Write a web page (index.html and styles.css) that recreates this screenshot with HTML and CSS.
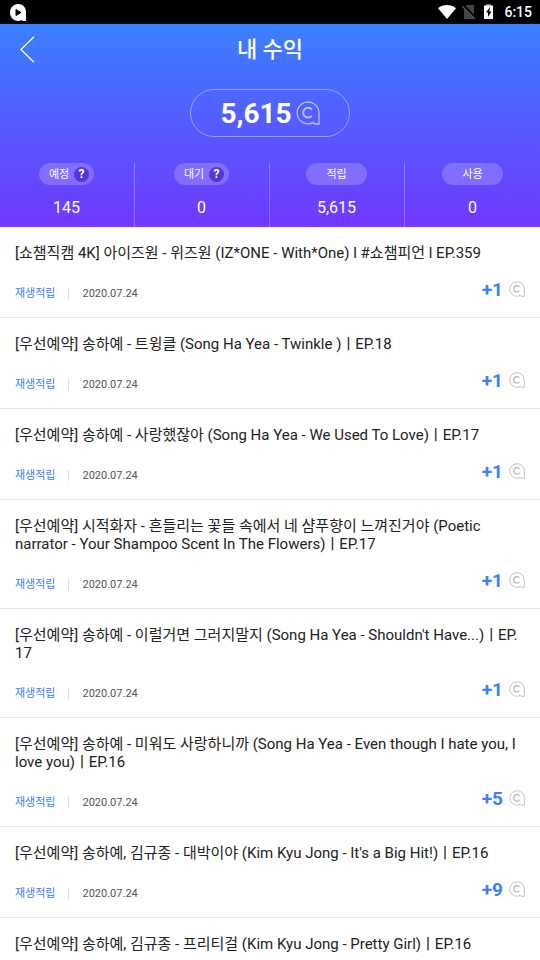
FILE: index.html
```
<!DOCTYPE html>
<html lang="ko">
<head>
<meta charset="utf-8">
<meta name="viewport" content="width=device-width, initial-scale=1">
<title>내 수익</title>
<link rel="stylesheet" href="styles.css">
</head>
<body>
<svg class="defs" aria-hidden="true">
  <symbol id="coin" viewBox="0 0 24 24">
    <path d="M23 12V23H18.500L17.500 21.400A10.900 10.900 0 1 1 23 12Z"/>
    <path stroke-width="2" d="M15.800 8.600A4.900 4.900 0 1 0 15.800 14.800"/>
  </symbol>
</svg>
<div class="statusbar">
  <svg class="app" width="16" height="17" viewBox="0 0 16 17">
    <path fill="#fff" d="M8 0C12.600 0 16 3.500 16 8V17H12.500L11.500 16Q10 17 8 17C3.500 17 0 13 0 8.500S3.500 0 8 0Z"/>
    <path fill="#000" stroke="#000" stroke-linejoin="round" d="M6 5.500L11 8.500L6 11.500Z"/>
  </svg>
  <div class="system">
    <svg width="18" height="14" viewBox="0 0 18 14"><path fill="#fff" d="M0 3.300C5.200-1.100 12.800-1.100 18 3.300L9 14Z"/></svg>
    <svg width="14" height="14" viewBox="0 0 14 14"><path fill="#444" d="M4.500 0H12V14H2V3Z"/><path stroke="#000" stroke-width="2" d="M1 0L14 13"/><path stroke="#555" stroke-width="1.300" d="M0 1L13 14"/></svg>
    <svg class="battery" width="9" height="15" viewBox="0 0 9 15"><path fill="#777" d="M2 0H7V2H2Z"/><path fill="#fff" d="M0 1.500H9V15H0Z"/><path fill="#000" d="M6 3L2 8.500H4V13L7.500 7.500H5.300Z"/></svg>
    <span class="clock">6:15</span>
  </div>
</div>

<header class="header">
  <div class="titlebar">
    <button class="back" type="button" aria-label="뒤로">
      <svg width="15" height="27" viewBox="0 0 15 27"><path fill="none" stroke="#fff" stroke-width="1.300" d="M14 .7L1 13.500L14 26.300"/></svg>
    </button>
    <h1>내 수익</h1>
  </div>
  <div class="total">5,615<svg><use href="#coin"/></svg></div>
  <ul class="summary">
    <li><span class="pill help">예정<button type="button" aria-label="예정 도움말">?</button></span><b>145</b></li>
    <li><span class="pill help">대기<button type="button" aria-label="대기 도움말">?</button></span><b>0</b></li>
    <li><span class="pill">적립</span><b>5,615</b></li>
    <li><span class="pill">사용</span><b>0</b></li>
  </ul>
</header>

<ul class="list">
  <li>
    <p class="name">[쇼챔직캠 4K] 아이즈원 - 위즈원 (IZ*ONE - With*One) l #쇼챔피언 l EP.359</p>
    <div class="meta"><span class="type">재생적립</span><span class="date">2020.07.24</span><span class="point">+1<svg><use href="#coin"/></svg></span></div>
  </li>
  <li>
    <p class="name">[우선예약] 송하예 - 트윙클 (Song Ha Yea - Twinkle )ㅣEP.18</p>
    <div class="meta"><span class="type">재생적립</span><span class="date">2020.07.24</span><span class="point">+1<svg><use href="#coin"/></svg></span></div>
  </li>
  <li>
    <p class="name">[우선예약] 송하예 - 사랑했잖아 (Song Ha Yea - We Used To Love)ㅣEP.17</p>
    <div class="meta"><span class="type">재생적립</span><span class="date">2020.07.24</span><span class="point">+1<svg><use href="#coin"/></svg></span></div>
  </li>
  <li>
    <p class="name">[우선예약] 시적화자 - 흔들리는 꽃들 속에서 네 샴푸향이 느껴진거야 (Poetic narrator - Your Shampoo Scent In The Flowers)ㅣEP.17</p>
    <div class="meta"><span class="type">재생적립</span><span class="date">2020.07.24</span><span class="point">+1<svg><use href="#coin"/></svg></span></div>
  </li>
  <li>
    <p class="name">[우선예약] 송하예 - 이럴거면 그러지말지 (Song Ha Yea - Shouldn't Have...)ㅣEP.<wbr>17</p>
    <div class="meta"><span class="type">재생적립</span><span class="date">2020.07.24</span><span class="point">+1<svg><use href="#coin"/></svg></span></div>
  </li>
  <li>
    <p class="name">[우선예약] 송하예 - 미워도 사랑하니까 (Song Ha Yea - Even though I hate you, I love you)ㅣEP.16</p>
    <div class="meta"><span class="type">재생적립</span><span class="date">2020.07.24</span><span class="point">+5<svg><use href="#coin"/></svg></span></div>
  </li>
  <li>
    <p class="name">[우선예약] 송하예, 김규종 - 대박이야 (Kim Kyu Jong - It's a Big Hit!)ㅣEP.16</p>
    <div class="meta"><span class="type">재생적립</span><span class="date">2020.07.24</span><span class="point">+9<svg><use href="#coin"/></svg></span></div>
  </li>
  <li>
    <p class="name">[우선예약] 송하예, 김규종 - 프리티걸 (Kim Kyu Jong - Pretty Girl)ㅣEP.16</p>
  </li>
</ul>
</body>
</html>
```
FILE: styles.css
```
*{box-sizing:border-box;}
html,body{height:100%;}
body{margin:0;display:flex;flex-direction:column;overflow:hidden;background:#fff;color:#222;font-family:Roboto,"Noto Sans CJK KR",sans-serif;font-size:15px;line-height:18px;}
ul,p,h1{margin:0;padding:0;list-style:none;}
button{border:0;padding:0;background:none;color:inherit;font:inherit;cursor:pointer;}
.defs{position:absolute;width:0;height:0;}
svg use{fill:none;stroke:currentColor;stroke-width:1.3;}

.statusbar{flex:none;display:flex;justify-content:space-between;align-items:center;height:24px;padding:0 8px 0 10px;background:#000;color:#fff;}
.system{display:flex;align-items:center;gap:6px;}
.battery{margin:0 5px 2px 2px;}
.clock{font-size:14px;font-weight:500;}

.header{flex:none;background:linear-gradient(#3a80ff,#7038ff);color:#fff;}
.titlebar{display:grid;grid-template-columns:40px 1fr 40px;align-items:center;height:50px;}
.back{display:flex;justify-content:center;width:54px;}
.titlebar h1{padding-top:2px;font-size:22px;line-height:30px;font-weight:500;text-align:center;}
.total{display:flex;align-items:center;justify-content:center;gap:4px;width:160px;height:48px;margin:15px auto 26px;padding-top:2px;border:1px solid rgba(255,255,255,.4);border-radius:24px;font-size:28px;font-weight:700;}
.total svg{width:24px;height:24px;margin-bottom:2px;color:rgba(255,255,255,.6);}
.summary{display:grid;grid-template-columns:repeat(4,1fr);}
.summary li{display:flex;flex-direction:column;align-items:center;height:64px;padding-right:1px;border-right:1px solid rgba(255,255,255,.25);}
.summary li:last-child{padding-right:0;border-right:0;}
.pill{display:flex;align-items:center;justify-content:center;width:61px;height:22px;border-radius:11px;background:rgba(255,255,255,.2);font-size:11px;line-height:20px;padding-top:1px;}
.help{width:55px;justify-content:space-between;padding:1px 5px 0 10px;}
.help button{width:15px;height:15px;margin-bottom:1px;border-radius:50%;background:#5735dc;font-size:12px;line-height:15px;font-weight:700;}
.summary b{margin-top:13px;font-size:16px;line-height:20px;font-weight:400;}

.list{flex:1;min-height:0;overflow:hidden;}
.list li{padding:17px 15px 16px;border-bottom:1px solid #e5e5e5;}
.meta{display:flex;align-items:flex-end;height:23px;margin-top:16px;font-size:11px;line-height:14px;}
.type{color:#3a80ff;}
.date{display:flex;align-items:center;color:#555;}
.date::before{content:"";width:1px;height:11px;margin:0 13px 2px;background:#ddd;}
.point{display:flex;align-items:center;align-self:flex-start;gap:6px;margin-left:auto;color:#3a80ff;font-size:19px;line-height:24px;font-weight:700;}
.point svg{width:16px;height:16px;margin-bottom:3px;color:#bbb;}
```
